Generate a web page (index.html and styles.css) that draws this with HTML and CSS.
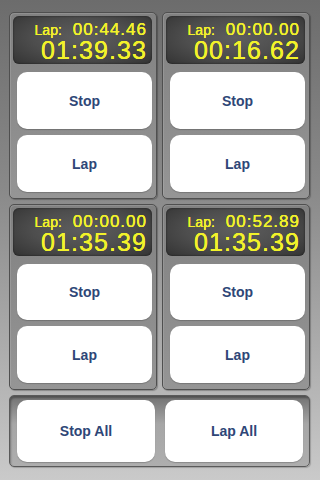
FILE: index.html
```html
<!DOCTYPE html>
<html>
<head>
<meta charset="utf-8">
<link rel="stylesheet" href="styles.css">
</head>
<body>
<div class="screen">
  <div class="grid">
    <div class="panel">
      <div class="display">
        <div class="lapline"><span class="laplabel">Lap:</span><span class="laptime">00:44.46</span></div>
        <div class="main">01:39.33</div>
      </div>
      <div class="btn">Stop</div>
      <div class="btn">Lap</div>
    </div>
    <div class="panel">
      <div class="display">
        <div class="lapline"><span class="laplabel">Lap:</span><span class="laptime">00:00.00</span></div>
        <div class="main">00:16.62</div>
      </div>
      <div class="btn">Stop</div>
      <div class="btn">Lap</div>
    </div>
    <div class="panel">
      <div class="display">
        <div class="lapline"><span class="laplabel">Lap:</span><span class="laptime">00:00.00</span></div>
        <div class="main">01:35.39</div>
      </div>
      <div class="btn">Stop</div>
      <div class="btn">Lap</div>
    </div>
    <div class="panel">
      <div class="display">
        <div class="lapline"><span class="laplabel">Lap:</span><span class="laptime">00:52.89</span></div>
        <div class="main">01:35.39</div>
      </div>
      <div class="btn">Stop</div>
      <div class="btn">Lap</div>
    </div>
  </div>
  <div class="allpanel">
    <div class="btn big">Stop All</div>
    <div class="btn big">Lap All</div>
  </div>
</div>
</body>
</html>
```

FILE: styles.css
```css
* { box-sizing: border-box; }
html, body { margin: 0; padding: 0; }
body {
  width: 320px;
  height: 480px;
  overflow: hidden;
  background: linear-gradient(to bottom, #6c6c6c 0%, #8a8a8a 40%, #b4b4b4 80%, #cacaca 100%);
  font-family: "Liberation Sans", Arial, sans-serif;
}
.screen {
  padding: 12px 10px 0 9px;
  display: flex;
  flex-direction: column;
  gap: 5px;
}
.grid {
  display: grid;
  grid-template-columns: 148px 148px;
  grid-template-rows: 187px 186px;
  column-gap: 5px;
  row-gap: 5px;
}
.panel {
  border: 1px solid #4f4f4f;
  border-radius: 5px;
  background: linear-gradient(to bottom, #818181, #959595);
  box-shadow: inset 1px 1px 0 rgba(255,255,255,0.12), 1px 1px 1px rgba(0,0,0,0.25);
  padding: 3px 4px 6px 3px;
  display: flex;
  flex-direction: column;
}
.display {
  height: 48px;
  border-radius: 6px;
  background: radial-gradient(ellipse at 50% 45%, #5e5e5e 0%, #4e4e4e 50%, #333333 100%);
  box-shadow: inset 0 0 2px rgba(0,0,0,0.6);
  padding: 5px 5px 0 0;
  color: #f2f22a;
  text-align: right;
  text-shadow: 0 0 0.6px #f2f22a, 0 0 0.6px #f2f22a;
}
.lapline {
  display: flex;
  justify-content: flex-end;
  align-items: baseline;
  gap: 11px;
  height: 17px;
  line-height: 17px;
}
.laplabel {
  font-size: 14px;
}
.laptime {
  font-size: 17px;
  letter-spacing: 1px;
}
.main {
  font-size: 25px;
  line-height: 25px;
  letter-spacing: 1.1px;
}
.btn {
  background: #ffffff;
  border-radius: 10px;
  height: 57px;
  display: flex;
  align-items: center;
  justify-content: center;
  color: #2e4677;
  font-weight: bold;
  font-size: 14px;
  margin: 8px 0 0 4px;
  box-shadow: 0 1px 1px rgba(0,0,0,0.2);
}
.btn + .btn {
  margin-top: 6px;
}
.allpanel {
  height: 72px;
  border: 1px solid #5a5a5a;
  border-radius: 5px;
  background: linear-gradient(to bottom, #727272, #a6a6a6 40%, #aeaeae);
  box-shadow: inset 1px 2px 2px rgba(0,0,0,0.3), 1px 1px 1px rgba(0,0,0,0.2);
  display: grid;
  grid-template-columns: 138px 138px;
  column-gap: 10px;
  padding: 4px 0 0 7px;
}
.allpanel .btn {
  margin: 0;
  height: 62px;
}
.allpanel .btn + .btn { margin-top: 0; }
```
